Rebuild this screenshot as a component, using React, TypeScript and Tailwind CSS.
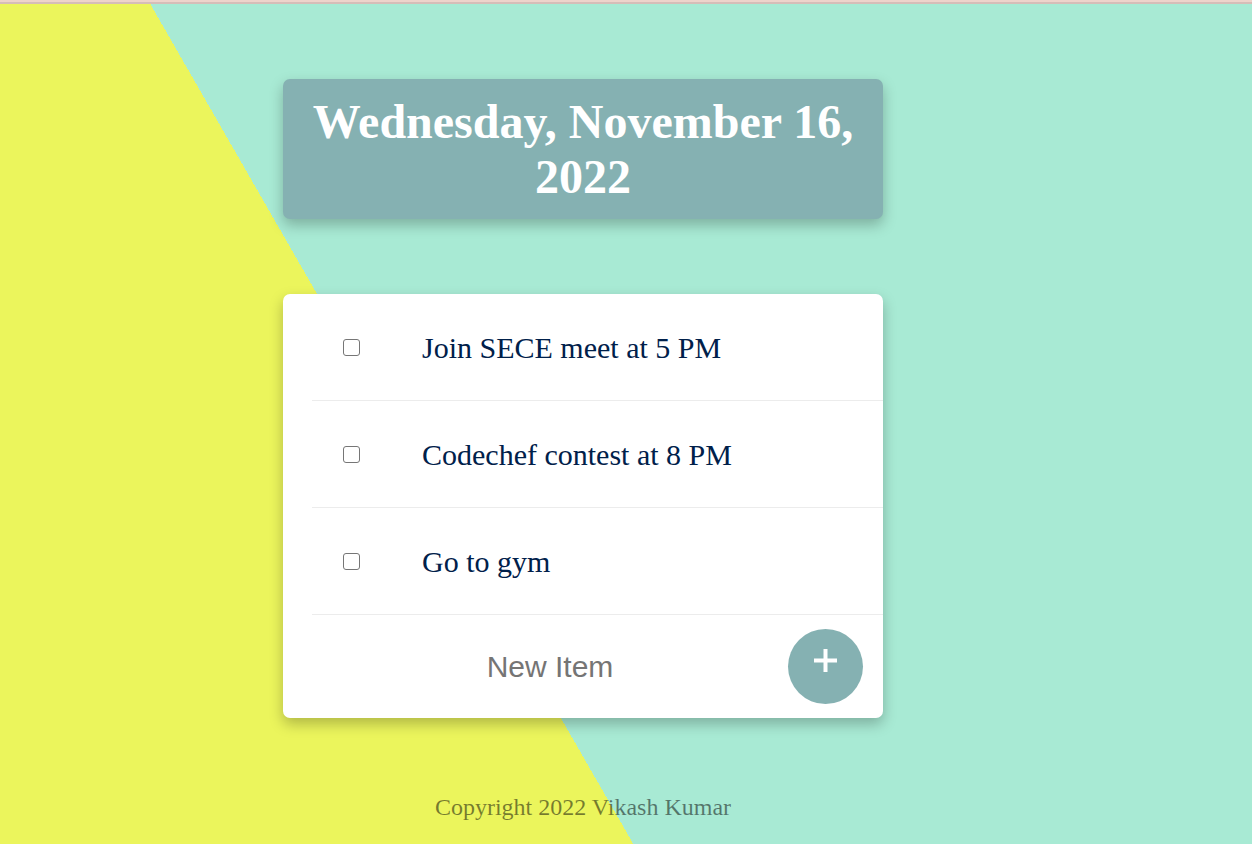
const items = ["Join SECE meet at 5 PM", "Codechef contest at 8 PM", "Go to gym"];

const App = () => {
  return (
    <div className="min-h-screen w-full bg-[linear-gradient(60.1deg,#ebf55c_549px,#a8ead4_549px)] font-['Liberation_Serif',serif]">
      <div className="h-[2px] bg-[#eed3cb]" />
      <div className="h-[2px] bg-[#d6bdb8]" />

      <div className="ml-[283px] w-[600px] pt-[75px] pb-[20px]">
        <div className="rounded-[7px] bg-[#85b1b2] py-[15px] px-[20px] text-center shadow-[0_6px_14px_rgba(0,0,0,0.25)]">
          <h1 className="text-[48px] leading-[55px] font-bold text-white">
            Wednesday, November 16, 2022
          </h1>
        </div>

        <div className="mt-[75px] rounded-[7px] bg-white shadow-[0_6px_14px_rgba(0,0,0,0.25)]">
          {items.map((item) => (
            <div
              key={item}
              className="ml-[29px] h-[107px] flex items-center border-b border-[#ececec] pl-[31px]"
            >
              <input
                type="checkbox"
                className="m-0 w-[17px] h-[17px] appearance-none rounded-[3px] border-[1.5px] border-[#767676] bg-white"
              />
              <p className="ml-[62px] text-[30px] text-[#00204a]">{item}</p>
            </div>
          ))}
          <div className="ml-[29px] h-[103px] flex items-center pr-[20px]">
            <input
              type="text"
              placeholder="New Item"
              className="flex-1 min-w-0 text-center text-[30px] font-['Liberation_Sans',Arial,sans-serif] placeholder:text-[#757575] outline-none bg-transparent"
            />
            <button className="w-[75px] h-[75px] rounded-full bg-[#85b1b2] flex items-center justify-center pb-[12px]">
              <svg width="23" height="23" viewBox="0 0 23 23">
                <rect x="0" y="9.5" width="23" height="4" fill="white" />
                <rect x="9.5" y="0" width="4" height="23" fill="white" />
              </svg>
            </button>
          </div>
        </div>

        <p className="mt-[75px] text-center text-[24px] leading-[28px] text-black/50">
          Copyright 2022 Vikash Kumar
        </p>
      </div>
    </div>
  );
};

export default App;
